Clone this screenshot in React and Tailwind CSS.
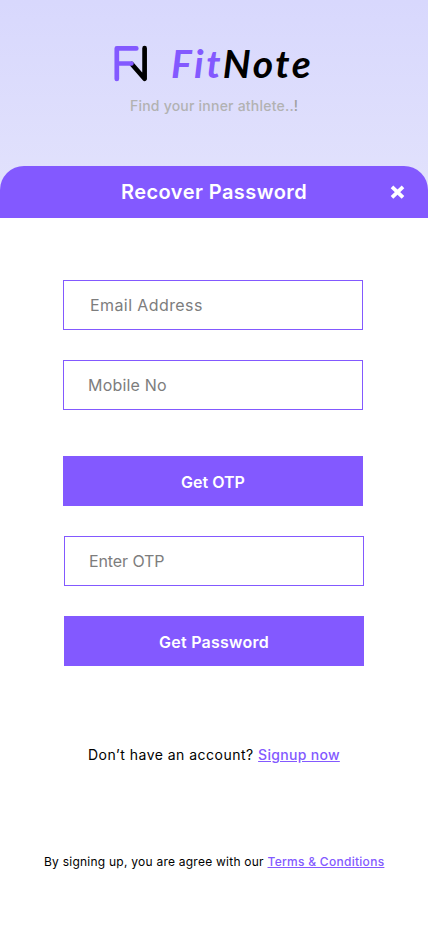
function LogoMark() {
  return (
    <svg width="36" height="40" viewBox="0 0 36 40" fill="none" strokeWidth="4.7" strokeLinecap="round" strokeLinejoin="round" aria-hidden="true">
      <path d="M18.7 21 L31.6 35.8 V5.2" stroke="#000" />
      <path d="M3.8 36 V5.4 H23.3 M3.8 20.5 H18.4" stroke="#8359ff" />
    </svg>
  );
}

function Field({ label, className }) {
  return (
    <input
      aria-label={label}
      placeholder={label}
      className={`h-[50px] w-[300px] border border-[#8359ff] bg-white text-base leading-6 outline-none placeholder:text-[#7d7d7d] ${className}`}
    />
  );
}

export default function App() {
  return (
    <div className="flex h-[926px] w-full flex-col overflow-hidden bg-white font-['Inter','Liberation_Sans',sans-serif]">
      <div className="flex h-[218px] shrink-0 flex-col bg-linear-to-b from-[#d8d8fd] to-[#e3e3fc]">
        <header className="flex h-[166px] flex-col">
          <div className="mt-[43px] ml-[113px] flex h-[42px] items-start">
            <LogoMark />
            <h1 className="ml-[22px] font-['Lato',sans-serif] text-[39px] leading-10 font-bold tracking-[2.6px] whitespace-nowrap text-black italic">
              <span className="text-[#8359ff]">Fit</span>Note
            </h1>
          </div>
          <p className="mt-[11px] ml-[130px] text-sm leading-5 font-medium tracking-[0.22px] whitespace-nowrap text-[#b2b2b2]">
            Find your inner athlete..<span className="text-[#a0a0a0]">!</span>
          </p>
        </header>
        <div className="flex h-[52px] items-center rounded-t-3xl bg-[#8359ff] text-white">
          <h2 className="ml-[121px] text-xl font-semibold tracking-[0.44px] whitespace-nowrap">Recover Password</h2>
          <button aria-label="Close" className="mr-[23px] ml-auto">
            <svg width="15" height="14" viewBox="0 0 15 14" stroke="white" strokeWidth="3.7" aria-hidden="true">
              <path d="M2 1.8 L13 12.4 M13 1.8 L2 12.4" />
            </svg>
          </button>
        </div>
      </div>
      <form className="mt-[62px] ml-[63px] flex w-[301px] flex-col">
        <Field label="Email Address" className="pl-[26px] tracking-[0.41px]" />
        <Field label="Mobile No" className="mt-[30px] pl-6 tracking-[0.2px]" />
        <button type="button" className="mt-[46px] h-[50px] w-[300px] bg-[#8359ff] pt-px font-semibold text-white">
          Get OTP
        </button>
        <Field label="Enter OTP" className="mt-[30px] ml-px pl-6 tracking-[-0.1px]" />
        <button type="button" className="mt-[30px] ml-px h-[50px] w-[300px] bg-[#8359ff] pt-px font-semibold tracking-[0.25px] text-white">
          Get Password
        </button>
      </form>
      <p className="mt-[79px] ml-[88px] text-sm leading-5 tracking-[0.48px] whitespace-nowrap text-black">
        Don’t have an account?{" "}
        <a href="#signup" className="font-medium tracking-[0.3px] text-[#8359ff] underline">Signup now</a>
      </p>
      <p className="mt-[87px] ml-11 text-xs leading-5 tracking-[0.24px] whitespace-nowrap text-black">
        By signing up, you are agree with our{" "}
        <a href="#terms" className="font-medium tracking-[0.28px] text-[#8359ff] underline">Terms &amp; Conditions</a>
      </p>
    </div>
  );
}
